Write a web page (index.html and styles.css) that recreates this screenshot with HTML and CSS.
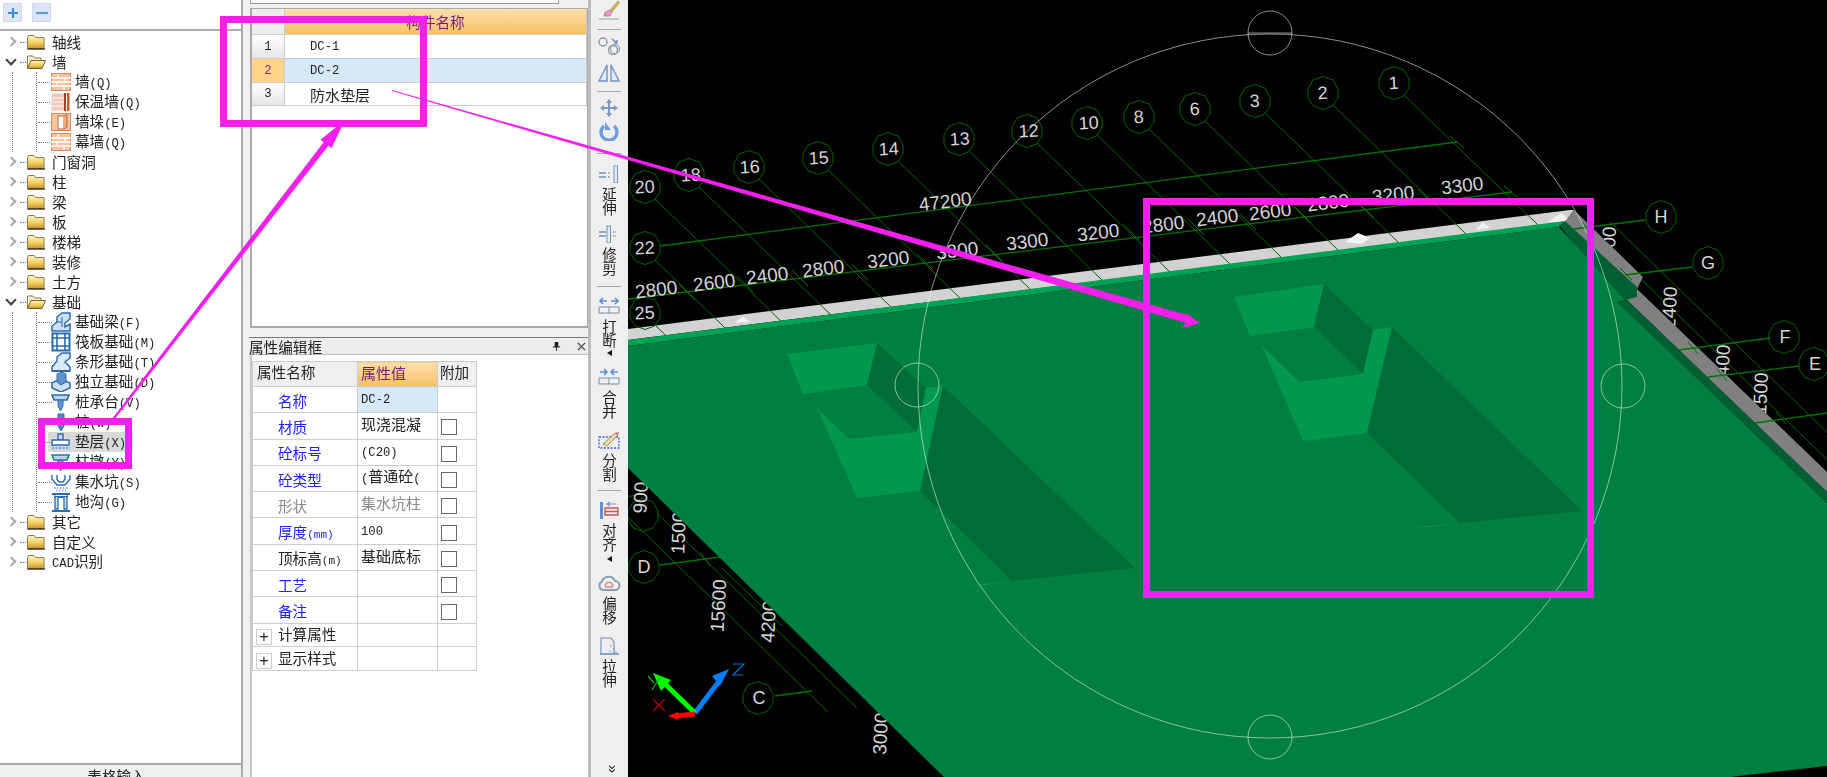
FILE: index.html
```html
<!DOCTYPE html>
<html lang="zh">
<head>
<meta charset="utf-8">
<title>GCL</title>
<link rel="stylesheet" href="styles.css">
</head>
<body>
<svg class="defs" width="0" height="0" aria-hidden="true">
  <defs>
    <linearGradient id="gf" x1="0" y1="0" x2="0" y2="1"><stop offset="0" stop-color="#fff6c8"/><stop offset=".55" stop-color="#f2cf62"/><stop offset="1" stop-color="#c8952c"/></linearGradient>
    <symbol id="folder" viewBox="0 0 20 16"><path d="M1.5 3.5 L2.5 1.5 H8 L9.5 3.5 H18 V14.5 H1.5Z" fill="url(#gf)" stroke="#8a7a50"/><path d="M1.5 15 H19" stroke="#3a2c10" stroke-width="1.4"/></symbol>
    <symbol id="folderopen" viewBox="0 0 20 16"><path d="M1.5 14 V2 H7 L8.5 4 H15 V7" fill="#fbf3d0" stroke="#8a7a50"/><path d="M1.5 14.5 L5 6.5 H19.5 L16 14.5Z" fill="url(#gf)" stroke="#7a6228"/></symbol>
    <symbol id="brick" viewBox="0 0 20 18"><rect x=".5" y=".5" width="19" height="17" fill="#f6c4a0" stroke="#d98a5a"/><path d="M0 5H20M0 9H20M0 13H20M7 1V5M14 5V9M6 9V13M13 13V17" stroke="#fff" stroke-width="1.3"/></symbol>
    <symbol id="insul" viewBox="0 0 20 18"><rect x=".5" y=".5" width="13" height="17" fill="#efc8b8"/><path d="M0 5H13M0 9H13M0 13H13" stroke="#fff"/><rect x="13" y="0" width="2" height="18" fill="#b03a20"/><rect x="16" y="0" width="2.5" height="18" fill="#c9572e"/></symbol>
    <symbol id="pier" viewBox="0 0 20 18"><rect x=".5" y=".5" width="19" height="17" fill="#f6c4a0" stroke="#d98a5a"/><path d="M7 3H13V16H7Z" fill="#fff" stroke="#c06a3a"/><path d="M13 3 L16 1 V14 L13 16" fill="#f3a878" stroke="#c06a3a"/></symbol>
    <symbol id="bbeam" viewBox="0 0 20 20"><path d="M1 19V14L6 10V5L11 1H19V7L14 11V15L19 12V19Z" fill="#cfe0f2" stroke="#2b6cad" stroke-width="1.5"/><path d="M6 10H11V15M11 5V10" stroke="#2b6cad" fill="none"/></symbol>
    <symbol id="braft" viewBox="0 0 20 20"><rect x="1.5" y="1.5" width="17" height="17" fill="#fff" stroke="#2b6cad" stroke-width="2"/><path d="M6 1V19M14 1V19M1 6H19M1 14H19" stroke="#2b6cad" stroke-width="1.6"/></symbol>
    <symbol id="bstrip" viewBox="0 0 20 20"><path d="M1 19V15L6 9V5L11 1H19V6L14 10L19 15V19Z" fill="#dbe8f5" stroke="#2b6cad" stroke-width="1.5"/><path d="M1 19H19" stroke="#2b6cad" stroke-width="2"/></symbol>
    <symbol id="biso" viewBox="0 0 20 20"><path d="M1 11 L9 7 L19 11 V16 L10 20 L1 16Z" fill="#cfe0f2" stroke="#2b6cad" stroke-width="1.5"/><path d="M6 10V2L11 0L15 2V10L10 13Z" fill="#5f95cb" stroke="#2b6cad"/></symbol>
    <symbol id="bcap" viewBox="0 0 20 20"><path d="M1 3H18L16 8H3Z" fill="#bcd4ec" stroke="#2b6cad" stroke-width="1.6"/><path d="M7 8H12V14L9.5 19L7 14Z" fill="#5f95cb" stroke="#2b6cad"/></symbol>
    <symbol id="bpile" viewBox="0 0 20 20"><path d="M7 2H13V14L10 19L7 14Z" fill="#4f88c4" stroke="#2b6cad"/></symbol>
    <symbol id="bpad" viewBox="0 0 20 20"><path d="M7 2H12V8H7Z" fill="none" stroke="#2b6cad" stroke-width="1.4"/><path d="M1 8H18V13H1Z" fill="#fff" stroke="#2b6cad" stroke-width="1.4"/><path d="M1 16H19" stroke="#7aa6d4" stroke-width="2.4" stroke-dasharray="2 1.5"/></symbol>
    <symbol id="bsump" viewBox="0 0 20 20"><path d="M1 3V7L6 13H14L19 7V3M6 3V7L8 10H12L14 7V3" fill="none" stroke="#2b6cad" stroke-width="1.4"/><path d="M3 16H17M5 18.5H15" stroke="#8fb4d8" stroke-width="2" stroke-dasharray="1.5 1.5"/></symbol>
    <symbol id="btrench" viewBox="0 0 20 20"><path d="M1 2H19M3 5H17M1 19H19" stroke="#2b6cad" stroke-width="1.8"/><path d="M4 5V17H7V5M13 5V17H16V5" fill="#cfe0f2" stroke="#2b6cad" stroke-width="1.3"/><path d="M2 1 L5 5M18 1 L15 5" stroke="#2b6cad"/></symbol>
    <polygon id="oct" points="0,-16.5 10,-13 15,-4 15,5 9.5,13 0,16.5 -9.5,13 -15,5 -15,-4 -10,-13"/>
  </defs>
</svg>

<main class="app">
  <section class="left soft">
    <div class="tools">
      <span class="tbtn"><svg viewBox="0 0 14 14"><path d="M7 2V12M2 7H12" stroke="#3f8fd0" stroke-width="2.2"/></svg></span>
      <span class="tbtn"><svg viewBox="0 0 14 14"><path d="M1 7H13" stroke="#5f9cd0" stroke-width="2.2"/></svg></span>
    </div>
    <div class="tree">
      <div class="node"><i class="exp"></i><i class="dash"></i><svg class="fold"><use href="#folder"/></svg><span>轴线</span></div>
      <div class="node"><i class="exp open"></i><i class="dash"></i><svg class="fold"><use href="#folderopen"/></svg><span>墙</span></div>
      <div class="kids"><div class="kids-inner">
        <div class="leaf"><svg class="ico"><use href="#brick"/></svg><span>墙<b>(Q)</b></span></div>
        <div class="leaf"><svg class="ico"><use href="#insul"/></svg><span>保温墙<b>(Q)</b></span></div>
        <div class="leaf"><svg class="ico"><use href="#pier"/></svg><span>墙垛<b>(E)</b></span></div>
        <div class="leaf"><svg class="ico"><use href="#brick"/></svg><span>幕墙<b>(Q)</b></span></div>
      </div></div>
      <div class="node"><i class="exp"></i><i class="dash"></i><svg class="fold"><use href="#folder"/></svg><span>门窗洞</span></div>
      <div class="node"><i class="exp"></i><i class="dash"></i><svg class="fold"><use href="#folder"/></svg><span>柱</span></div>
      <div class="node"><i class="exp"></i><i class="dash"></i><svg class="fold"><use href="#folder"/></svg><span>梁</span></div>
      <div class="node"><i class="exp"></i><i class="dash"></i><svg class="fold"><use href="#folder"/></svg><span>板</span></div>
      <div class="node"><i class="exp"></i><i class="dash"></i><svg class="fold"><use href="#folder"/></svg><span>楼梯</span></div>
      <div class="node"><i class="exp"></i><i class="dash"></i><svg class="fold"><use href="#folder"/></svg><span>装修</span></div>
      <div class="node"><i class="exp"></i><i class="dash"></i><svg class="fold"><use href="#folder"/></svg><span>土方</span></div>
      <div class="node"><i class="exp open"></i><i class="dash"></i><svg class="fold"><use href="#folderopen"/></svg><span>基础</span></div>
      <div class="kids"><div class="kids-inner">
        <div class="leaf"><svg class="ico"><use href="#bbeam"/></svg><span>基础梁<b>(F)</b></span></div>
        <div class="leaf"><svg class="ico"><use href="#braft"/></svg><span>筏板基础<b>(M)</b></span></div>
        <div class="leaf"><svg class="ico"><use href="#bstrip"/></svg><span>条形基础<b>(T)</b></span></div>
        <div class="leaf"><svg class="ico"><use href="#biso"/></svg><span>独立基础<b>(D)</b></span></div>
        <div class="leaf"><svg class="ico"><use href="#bcap"/></svg><span>桩承台<b>(V)</b></span></div>
        <div class="leaf"><svg class="ico"><use href="#bpile"/></svg><span>桩<b>(W)</b></span></div>
        <div class="leaf sel"><svg class="ico"><use href="#bpad"/></svg><span>垫层<b>(X)</b></span></div>
        <div class="leaf"><svg class="ico"><use href="#bcap"/></svg><span>柱墩<b>(Y)</b></span></div>
        <div class="leaf"><svg class="ico"><use href="#bsump"/></svg><span>集水坑<b>(S)</b></span></div>
        <div class="leaf"><svg class="ico"><use href="#btrench"/></svg><span>地沟<b>(G)</b></span></div>
      </div></div>
      <div class="node"><i class="exp"></i><i class="dash"></i><svg class="fold"><use href="#folder"/></svg><span>其它</span></div>
      <div class="node"><i class="exp"></i><i class="dash"></i><svg class="fold"><use href="#folder"/></svg><span>自定义</span></div>
      <div class="node"><i class="exp"></i><i class="dash"></i><svg class="fold"><use href="#folder"/></svg><span><b>CAD</b>识别</span></div>
    </div>
    <div class="tab">表格输入</div>
  </section>

  <section class="mid soft">
    <div class="strip"></div>
    <div class="listpanel">
      <div class="list">
        <div class="cell corner"></div><div class="cell listhead">构件名称</div>
        <div class="cell idx">1</div><div class="cell item"><b>DC-1</b></div>
        <div class="cell idx on">2</div><div class="cell item on"><b>DC-2</b></div>
        <div class="cell idx">3</div><div class="cell item">防水垫层</div>
      </div>
    </div>
    <div class="proptitle">
      <span>属性编辑框</span>
      <span class="wintools">
        <svg viewBox="0 0 12 12"><path d="M4 1H8V6H10V7H6.5V11H5.5V7H2V6H4Z" fill="#222"/></svg>
        <svg viewBox="0 0 12 12"><path d="M2 2L10 10M10 2L2 10" stroke="#444" stroke-width="1.4"/></svg>
      </span>
    </div>
    <div class="proppanel">
      <table class="props">
        <colgroup><col class="c1"><col class="c2"><col class="c3"></colgroup>
        <tr class="ph"><th>属性名称</th><th class="act">属性值</th><th>附加</th></tr>
        <tr><td class="nm">名称</td><td class="val on"><b>DC-2</b></td><td></td></tr>
        <tr><td class="nm">材质</td><td class="val">现浇混凝</td><td class="cc"><i class="chk"></i></td></tr>
        <tr><td class="nm">砼标号</td><td class="val"><b>(C20)</b></td><td class="cc"><i class="chk"></i></td></tr>
        <tr><td class="nm">砼类型</td><td class="val"><b>(</b>普通砼<b>(</b></td><td class="cc"><i class="chk"></i></td></tr>
        <tr><td class="nm off">形状</td><td class="val off">集水坑柱</td><td class="cc"><i class="chk"></i></td></tr>
        <tr><td class="nm">厚度<b>(mm)</b></td><td class="val"><b>100</b></td><td class="cc"><i class="chk"></i></td></tr>
        <tr><td class="nm blk">顶标高<b>(m)</b></td><td class="val">基础底标</td><td class="cc"><i class="chk"></i></td></tr>
        <tr><td class="nm">工艺</td><td class="val"></td><td class="cc"><i class="chk"></i></td></tr>
        <tr><td class="nm">备注</td><td class="val"></td><td class="cc"><i class="chk"></i></td></tr>
        <tr class="grp"><td><i class="plus">+</i>计算属性</td><td></td><td></td></tr>
        <tr class="grp"><td><i class="plus">+</i>显示样式</td><td></td><td></td></tr>
      </table>
    </div>
  </section>

  <nav class="toolbar soft">
    <svg class="ti tall" viewBox="0 0 24 20"><path d="M2 19H22" stroke="#8aa" /><path d="M13 10L21 1L22.5 2.5L15 12Z" fill="#d9b45a" stroke="#a08030" stroke-width=".6"/><path d="M8 12L13 10L15 12L13 16L7 16Z" fill="#e79ac8" stroke="#b06a98" stroke-width=".7"/></svg>
    <hr class="sep m9">
    <svg class="ti m7" viewBox="0 0 24 18"><circle cx="6" cy="5" r="4" fill="none" stroke="#8c98a8" stroke-width="1.4"/><circle cx="16" cy="13" r="4.5" fill="none" stroke="#8c98a8" stroke-width="1.4"/><circle cx="18" cy="12" r="4.5" fill="none" stroke="#8c98a8" stroke-width="1.2"/><path d="M15 2L20 6M20 3V6H17" fill="none" stroke="#5a86c0" stroke-width="1.2"/></svg>
    <svg class="ti m9" viewBox="0 0 24 18"><path d="M2 17L10 1V17ZM22 17L14 1V17Z" fill="#e3ecf7" stroke="#6f93c4" stroke-width="1.4"/></svg>
    <hr class="sep m9">
    <svg class="ti m7" viewBox="0 0 24 18"><path d="M12 0L15 4H13V8H17V6L21 9L17 12V10H13V14H15L12 18L9 14H11V10H7V12L3 9L7 6V8H11V4H9Z" fill="#7c9bc0"/></svg>
    <svg class="ti tall m4" viewBox="0 0 24 20"><path d="M7 5A8 8 0 1 0 17 5" fill="none" stroke="#6e9ce0" stroke-width="3.4"/><path d="M8 1V9H14Z" fill="#6e9ce0"/></svg>
    <hr class="sep m12">
    <div class="tool m11">
      <svg class="ti" viewBox="0 0 24 18"><path d="M2 8H9M2 12H9" stroke="#6f93c4" stroke-width="1.6"/><path d="M11 8H13M11 12H13" stroke="#6f93c4" stroke-width="1.6" stroke-dasharray="1.5 1"/><rect x="17" y="1" width="3.5" height="17" fill="#e3ecf7" stroke="#6f93c4"/></svg>
      <span class="vt">延伸</span>
    </div>
    <div class="tool m9">
      <svg class="ti" viewBox="0 0 24 18"><path d="M2 7H9M2 11H9" stroke="#6f93c4" stroke-width="1.6"/><path d="M16 7H19M16 11H19" stroke="#6f93c4" stroke-dasharray="1.5 1" stroke-width="1.6"/><rect x="10" y="1" width="3.5" height="17" fill="#e3ecf7" stroke="#6f93c4"/></svg>
      <span class="vt">修剪</span>
    </div>
    <hr class="sep m10">
    <div class="tool m10">
      <svg class="ti" viewBox="0 0 24 18"><path d="M10 4H3M6 1L3 4L6 7M14 4H21M18 1L21 4L18 7" fill="none" stroke="#5f8fd0" stroke-width="1.6"/><path d="M2 10H22V16H2ZM12 10V16" fill="#eef2f7" stroke="#7a8aa0"/></svg>
      <span class="vt">打断</span>
    </div>
    <i class="more m2"></i>
    <div class="tool m12">
      <svg class="ti" viewBox="0 0 24 18"><path d="M3 4H10M7 1L10 4L7 7M21 4H14M17 1L14 4L17 7" fill="none" stroke="#5f8fd0" stroke-width="1.6"/><path d="M2 10H22V16H2ZM12 10V16" fill="#eef2f7" stroke="#7a8aa0"/></svg>
      <span class="vt">合并</span>
    </div>
    <div class="tool m12">
      <svg class="ti" viewBox="0 0 24 18"><rect x="2" y="6" width="20" height="11" fill="none" stroke="#3b5fe0" stroke-dasharray="2 1.4" stroke-width="1.3"/><path d="M6 13L18 2L21 4L10 15Z" fill="#e8d8b0" stroke="#a07848" stroke-width=".8"/><path d="M18 2L21 4L22 1Z" fill="#d06060"/></svg>
      <span class="vt">分割</span>
    </div>
    <hr class="sep m8">
    <div class="tool m10">
      <svg class="ti" viewBox="0 0 24 18"><rect x="3" y="1" width="3" height="17" fill="#5f8fd0"/><path d="M8 14H21V7H8ZM8 10.5H21" fill="none" stroke="#c05a50" stroke-width="1.4"/><path d="M19 3H10M13 1L10 3L13 5" fill="none" stroke="#6f93c4" stroke-width="1.2"/></svg>
      <span class="vt">对齐</span>
    </div>
    <i class="more m4"></i>
    <div class="tool m12">
      <svg class="ti" viewBox="0 0 24 18"><path d="M6 16A4.5 4.5 0 0 1 5 7.5A7 7 0 0 1 18 7A4.5 4.5 0 0 1 18 16Z" fill="none" stroke="#8aa0b8" stroke-width="2"/><path d="M9 13A2 2 0 0 1 9 10A3.5 3.5 0 0 1 15 10A2 2 0 0 1 15 13Z" fill="none" stroke="#e08a80" stroke-width="1.5"/></svg>
      <span class="vt">偏移</span>
    </div>
    <div class="tool m12">
      <svg class="ti" viewBox="0 0 24 18"><path d="M4 17V1H14L17 5V17" fill="none" stroke="#6f93c4" stroke-width="1.2"/><path d="M3 17H22" stroke="#6f93c4" stroke-width="1.6"/><path d="M14 8V10M17 11V13M19 14V16M13 13V15" stroke="#8a98a8"/></svg>
      <span class="vt">拉伸</span>
    </div>
    <span class="chev">»</span>
  </nav>

  <svg class="canvas" viewBox="628 0 1199 777" aria-label="三维视图">
    <rect x="628" y="0" width="1199" height="777" fill="#000"/>

    <polygon class="wall" points="628,329 1570,210 1574,210 1565,222 628,340"/>
    <path class="tri" d="M735 323L743 316L750 322ZM1345 242L1358 233L1370 238L1362 244ZM1476 230L1483 222L1490 228ZM1548 222L1561 213L1568 219L1560 222Z"/>

    <g class="axis">
      <path d="M655 199l400 388M699 187l400 388M759 179l400 388M828 170l400 388M898 161l400 388M969 151l400 388M1037 143l400 388M1097 135l400 388M1149 129l400 388M1205 121l400 388M1265 113l400 388M1333 105l400 388M1404 95l400 388M655 260l400 388M655 325l200 194"/>
      <path d="M1610 222l260 252M1582 222l260 252"/>
      <path d="M657 513l200 195M628 517l200 195M722 568l60 58"/>
    </g>
    <g class="dim">
      <path d="M660 246L1457 142"/>
      <path d="M628 299L1512 192"/>
      <path d="M660 565L720 557M775 696L812 691"/>
    </g>
    <path class="tick" d="M1450 136l14 12M1504 186l14 12M679 284l16 16M737 276l16 16M792 270l16 16M852 264l16 16M917 254l16 16M986 245l16 16M1056 235l16 16M1123 224l16 16M1188 219l16 16M1240 214l16 16M1295 207l16 16M1358 202l16 16M1418 189l16 16M700 552l10 14"/>

    <g class="oct">
      <use href="#oct" x="645" y="187"/><use href="#oct" x="689" y="175"/><use href="#oct" x="749" y="167"/><use href="#oct" x="818" y="158"/><use href="#oct" x="888" y="149"/><use href="#oct" x="959" y="139"/><use href="#oct" x="1027" y="131"/><use href="#oct" x="1087" y="123"/><use href="#oct" x="1139" y="117"/><use href="#oct" x="1195" y="109"/><use href="#oct" x="1255" y="101"/><use href="#oct" x="1323" y="93"/><use href="#oct" x="1394" y="83"/>
      <use href="#oct" x="645" y="248"/><use href="#oct" x="645" y="313"/>
      <use href="#oct" x="1661" y="217"/><use href="#oct" x="1708" y="263"/><use href="#oct" x="1784" y="337"/><use href="#oct" x="1814" y="364"/>
      <use href="#oct" x="644" y="567"/><use href="#oct" x="758" y="698"/><use href="#oct" x="643" y="515"/><use href="#oct" x="630" y="480"/>
    </g>

    <g class="lab bub">
      <text transform="translate(645 193) rotate(-3)">20</text><text transform="translate(691 181) rotate(-3)">18</text><text transform="translate(750 173) rotate(-3)">16</text><text transform="translate(819 164) rotate(-3)">15</text><text transform="translate(889 155) rotate(-3)">14</text><text transform="translate(960 145) rotate(-3)">13</text><text transform="translate(1029 137) rotate(-3)">12</text><text transform="translate(1089 129) rotate(-3)">10</text><text transform="translate(1139 123) rotate(-3)">8</text><text transform="translate(1195 115) rotate(-3)">6</text><text transform="translate(1255 107) rotate(-3)">3</text><text transform="translate(1323 99) rotate(-3)">2</text><text transform="translate(1394 89) rotate(-3)">1</text>
      <text transform="translate(645 254) rotate(-3)">22</text><text transform="translate(645 319) rotate(-3)">25</text>
      <text transform="translate(1661 223)">H</text><text transform="translate(1708 269)">G</text><text transform="translate(1785 343)">F</text><text transform="translate(1815 370)">E</text>
      <text transform="translate(644 573)">D</text><text transform="translate(759 704)">C</text>
    </g>
    <g class="lab">
      <text transform="translate(946 208) rotate(-7)">47200</text>
      <text transform="translate(657 296) rotate(-7)">2800</text><text transform="translate(715 289) rotate(-7)">2600</text><text transform="translate(768 282) rotate(-7)">2400</text><text transform="translate(824 275) rotate(-7)">2800</text><text transform="translate(889 266) rotate(-7)">3200</text><text transform="translate(958 257) rotate(-7)">3300</text><text transform="translate(1028 248) rotate(-7)">3300</text><text transform="translate(1099 239) rotate(-7)">3200</text><text transform="translate(1164 231) rotate(-7)">2800</text><text transform="translate(1218 224) rotate(-7)">2400</text><text transform="translate(1271 218) rotate(-7)">2600</text><text transform="translate(1329 209) rotate(-7)">2800</text><text transform="translate(1394 201) rotate(-7)">3200</text><text transform="translate(1463 192) rotate(-7)">3300</text>
      <text transform="translate(647 498) rotate(-87)">900</text><text transform="translate(685 533) rotate(-88)">1500</text><text transform="translate(725 606) rotate(-87)">15600</text><text transform="translate(775 622) rotate(-87)">4200</text><text transform="translate(887 734) rotate(-87)">3000</text>
      <text transform="translate(1615 248) rotate(-87)">2400</text><text transform="translate(1676 308) rotate(-87)">2400</text><text transform="translate(1729 366) rotate(-87)">2400</text><text transform="translate(1767 394) rotate(-87)">1500</text>
    </g>

    <polygon class="side" points="1574,210 1643,277 1637,289 1827,472 1827,492 1627,300 1565,222"/>
    <polygon class="band" points="628,340 1565,221 1559,227 628,346"/>
    <polygon class="shade" points="1559,225 1566,222 1637,287 1637,297 1626,300 1617,302 1827,503 1827,492 1627,300 1625,300 1619,302"/>
    <polygon class="plate" points="628,346 1559,227 1625,300 1617,302 1827,503 1827,766 1730,777 944,777 628,468"/>

    <polygon class="pitlight" points="787,354 877,343 867,385 803,394"/>
    <polygon class="pitdark" points="877,343 926,388 917,432 867,385"/>
    <polygon class="pitlight" points="817,408 849,439 917,432 926,388 943,386 920,491 857,498"/>
    <polygon class="pitdark" points="943,386 1135,568 1012,581 920,491"/>
    <polygon class="pitlight" points="955,587 1012,581 985,585"/>

    <polygon class="pitlight" points="1234,297 1324,284 1314,327 1250,336"/>
    <polygon class="pitdark" points="1324,284 1373,330 1363,374 1314,327"/>
    <polygon class="pitlight" points="1262,346 1299,382 1363,374 1373,330 1392,327 1367,433 1303,441"/>
    <polygon class="pitdark" points="1392,327 1582,511 1460,523 1367,433"/>
    <polygon class="pitlight" points="1407,528 1460,523 1430,527"/>

    <g class="dim">
      <path d="M1645 220L1574 229M1692 267L1625 275M1770 338L1679 350M1799 366L1708 377M1827 413L1755 423"/>
    </g>
    <path class="tick" d="M1582 222l12 14M1620 268l12 12M1688 342l10 12M1717 369l10 12M1776 412l10 12"/>

    <g class="ring">
      <circle cx="1270" cy="386" r="352"/>
      <circle cx="1270" cy="33" r="22"/><circle cx="917" cy="385" r="22"/><circle cx="1623" cy="386" r="22"/><circle cx="1270" cy="737" r="22"/>
      <path d="M1248 33H1292"/>
    </g>

    <g class="triad">
      <path class="tz" d="M695 713L720 680"/><path class="tzh" d="M729 669L720 686L712 676Z"/>
      <path class="tzl" d="M733 664H744L733 675H743"/>
      <path class="ty" d="M695 713L662 681"/><path class="tyh" d="M653 673L671 680L661 691Z"/>
      <path class="tyl" d="M648 676L654 683M661 676L652 690"/>
      <path class="tx" d="M695 714L676 716"/><path class="txh" d="M668 716L678 712V720Z"/>
      <path class="txl" d="M653 699L665 711M665 699L653 711"/>
    </g>
  </svg>

  <svg class="annot" viewBox="0 0 1827 777" aria-hidden="true">
    <rect x="223.5" y="19.5" width="200" height="104"/>
    <rect x="41.5" y="421.5" width="87" height="44"/>
    <rect x="1146.5" y="201.5" width="444" height="393"/>
    <polygon class="fill" points="112,419 114,420 328.4,145.8 331.5,148.3 345,120 320.5,139.7 323.6,142.2"/>
    <polygon class="fill" points="392,90 392,91 1186,323 1182,328 1200,323 1186,313 1187,315"/>
  </svg>
</main>
</body>
</html>
```

FILE: styles.css
```css
* { box-sizing: border-box; }
html, body { margin: 0; height: 777px; overflow: hidden; background: #efefef; }
body { font-family: "Noto Sans CJK SC", sans-serif; font-size: 14.6px; color: #222; }
.defs { position: absolute; }
b { font-family: "Liberation Mono", monospace; font-weight: 400; font-size: 12.2px; }
i { font-style: normal; }
.soft { filter: blur(.35px); }

.app { position: relative; display: flex; width: 1827px; height: 777px; }

/* left tree */
.left { width: 243px; flex: none; display: flex; flex-direction: column; background: #fff; border-right: 2px solid #a9a9a9; }
.tools { height: 31px; flex: none; display: flex; gap: 10px; padding: 3px 0 0 3px; border-bottom: 2px solid #adadad; }
.tbtn { width: 19px; height: 19px; background: #dbe5f7; border: 1px solid #ccd8ee; display: flex; align-items: center; justify-content: center; }
.tbtn svg { width: 14px; height: 14px; }
.tree { flex: 1; padding-top: 1px; line-height: 20px; }
.node { height: 20px; display: flex; align-items: center; position: relative; padding-left: 26px; white-space: nowrap; }
.node span { margin-left: 6px; }
.exp { position: absolute; left: 8px; top: 6px; width: 7px; height: 7px; border-top: 2px solid #aaa; border-right: 2px solid #aaa; transform: rotate(45deg); }
.exp.open { left: 7px; top: 4px; border-color: #444; transform: rotate(135deg); width: 8px; height: 8px; }
.dash { position: absolute; left: 20px; top: 10px; width: 6px; border-top: 1px dotted #777; }
.fold { width: 20px; height: 16px; flex: none; }
.kids { margin-left: 12px; border-left: 1px dotted #777; padding-left: 23px; }
.kids-inner { border-left: 1px dotted #777; }
.leaf { height: 20px; display: flex; align-items: center; padding-left: 14px; position: relative; white-space: nowrap; }
.leaf::before { content: ""; position: absolute; left: 1px; top: 10px; width: 14px; border-top: 1px dotted #777; }
.leaf span { margin-left: 4px; position: relative; }
.ico { width: 20px; height: 20px; flex: none; position: relative; }
.sel { background: linear-gradient(#d9d9d9, #d9d9d9) 11px 0 / 85px 20px no-repeat; }
.tab { height: 14px; flex: none; background: #efefef; border-top: 2px solid #a9a9a9; text-align: center; line-height: 22px; overflow: hidden; padding-right: 8px; }

/* middle */
.mid { width: 348px; flex: none; display: flex; flex-direction: column; background: #f0f0f0; padding-left: 7px; border-right: 3px solid #bdbdbd; }
.strip { height: 4px; margin-right: 29px; border: 1px solid #9a9a9a; border-top: 0; background: #fafafa; flex: none; }
.listpanel { height: 320px; margin-top: 4px; flex: none; background: #fff; border: 1px solid #aaa; border-width: 1px 1px 2px 2px; }
.list { display: grid; grid-template-columns: 33px 1fr; grid-template-rows: 26px 24px 24px 23px; }
.cell { border-right: 1px solid #ccc; border-bottom: 1px solid #ccc; display: flex; align-items: center; }
.corner { background: #ededed; }
.listhead { justify-content: center; color: #761a7a; background: linear-gradient(#fbdfa8, #f4c266); }
.idx { justify-content: center; background: linear-gradient(#fdfdfd, #e6e6e6); font-family: "Liberation Mono", monospace; font-size: 12.2px; }
.idx.on { background: #ffd48a; color: #8a1f8a; }
.item { padding-left: 25px; background: #fff; font-size: 15px; }
.item.on { background: #d7e8f7; }
.proptitle { height: 18px; margin-top: 9px; flex: none; display: flex; justify-content: space-between; align-items: center; border-top: 1px solid #777; border-bottom: 1px solid #bbb; background: #ececec; margin-left: -1px; white-space: nowrap; }
.wintools { display: flex; gap: 14px; padding-right: 1px; }
.wintools svg { width: 11px; height: 11px; }
.proppanel { flex: 1; background: #fff; padding: 6px 0 0 0; border-left: 2px solid #c8c8c8; }
.props { border-collapse: collapse; table-layout: fixed; width: 224px; line-height: 1; }
.c1 { width: 105px; } .c2 { width: 80px; } .c3 { width: 39px; }
.props th, .props td { height: 26.3px; border: 1px solid #ccc; padding: 0; font-weight: 400; white-space: nowrap; overflow: hidden; }
.props th { height: 25px; background: #efefef; text-align: left; padding: 0 0 4px 4px; }
.props th.act { background: linear-gradient(#fbdfa8, #f4c266); color: #761a7a; padding-left: 3px; font-size: 15px; }
.props th:last-child { padding-left: 2px; }
.props .nm { padding: 3px 0 0 25px; color: #2020f0; }
.nm b { color: inherit; font-size: 11px; }
.props .nm.off, .props .val.off { color: #8a8a8a; }
.props .nm.blk { color: #222; }
.props .val { padding: 0 0 4px 3px; font-size: 15px; }
.props .val.on { background: #d7e8f7; }
.props .cc { padding-top: 3px; }
.chk { display: block; width: 16px; height: 16px; border: 1px solid #666; background: #fff; margin-left: 3px; }
.props .grp td { height: 23.7px; padding-top: 2px; }
.plus { display: inline-block; width: 16px; height: 16px; margin: 0 6px 0 3px; border: 1px solid #ccc; text-align: center; line-height: 13px; font-size: 16px; font-family: "Liberation Sans", sans-serif; vertical-align: -2px; color: #222; }

/* toolbar */
.toolbar { width: 37px; flex: none; display: flex; flex-direction: column; align-items: center; background: #efefef; height: 777px; padding-right: 1px; }
.ti { width: 24px; height: 18px; display: block; flex: none; }
.tall { height: 20px; }
.sep { width: 24px; height: 1px; border: 0; background: #a8a8a8; margin: 0; flex: none; }
.tool { display: flex; flex-direction: column; align-items: center; gap: 4px; flex: none; }
.vt { writing-mode: vertical-rl; text-orientation: upright; line-height: 16px; height: 29px; font-size: 14.5px; letter-spacing: 0; display: block; }
.more { width: 0; height: 0; border: 3px solid transparent; border-right: 5px solid #111; border-left: 0; flex: none; height: 6px; }
.chev { margin-top: auto; margin-bottom: 1px; font-family: "Liberation Sans", sans-serif; transform: rotate(90deg); font-size: 15px; line-height: 14px; margin-left: 8px; }
.m2 { margin-top: 2px; } .m4 { margin-top: 4px; } .m7 { margin-top: 7px; } .m8 { margin-top: 8px; }
.m9 { margin-top: 9px; } .m10 { margin-top: 10px; } .m11 { margin-top: 11px; } .m12 { margin-top: 12px; }

/* canvas */
.canvas { flex: 1; height: 777px; display: block; background: #000; }
.wall { fill: #d2d2d2; }
.tri { fill: #f2f2f2; }
.axis { fill: none; stroke: #006400; stroke-width: 1; }
.dim { fill: none; stroke: #007400; stroke-width: 1.3; }
.tick { fill: none; stroke: #007400; stroke-width: 1; }
.oct { fill: #000; fill-opacity: 0; stroke: #006400; stroke-width: 1; }
.lab text { font-family: "Liberation Sans", sans-serif; font-size: 19px; fill: #d6d6d6; text-anchor: middle; }
.bub text { font-size: 18px; }
.side { fill: #808080; }
.band { fill: #00a353; }
.shade { fill: #006034; }
.plate { fill: #008040; }
.pitlight { fill: #00984c; }
.pitdark { fill: #006c38; }
.ring { fill: none; stroke: rgba(225, 240, 235, .6); stroke-width: 1; }
.tz { stroke: #0080ff; stroke-width: 5; }
.tzh { fill: #0080ff; }
.tzl { fill: none; stroke: #0070e0; stroke-width: 1.2; }
.ty { stroke: #00ff00; stroke-width: 5; }
.tyh { fill: #00ff00; }
.tyl { fill: none; stroke: #00c000; stroke-width: 1.2; }
.tx { stroke: #ff0000; stroke-width: 5; }
.txh { fill: #ff0000; }
.txl { fill: none; stroke: #c00000; stroke-width: 1.2; }

/* annotations */
.annot { position: absolute; left: 0; top: 0; width: 1827px; height: 777px; pointer-events: none; fill: none; stroke: #f31fec; stroke-width: 7; }
.annot .fill { fill: #f31fec; stroke: none; }
```
